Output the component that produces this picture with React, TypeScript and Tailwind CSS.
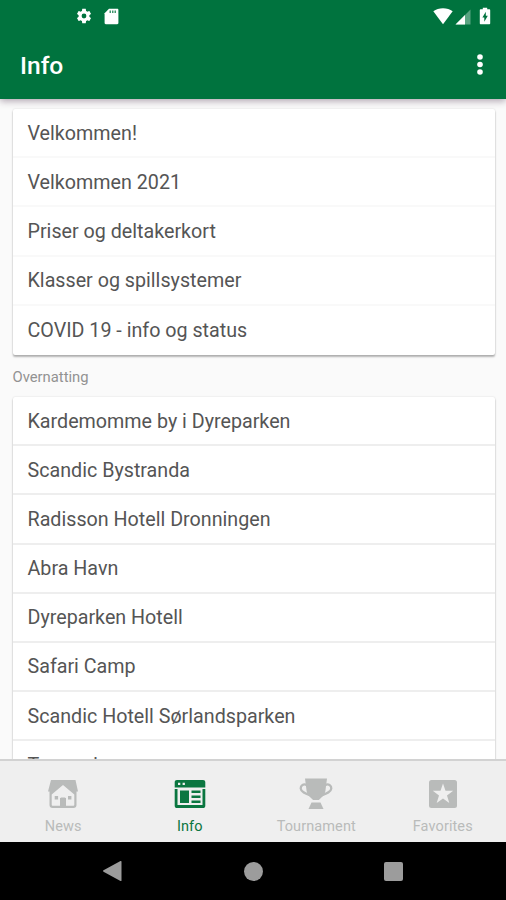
import { ReactNode } from 'react';

const infoItems = [
    'Velkommen!',
    'Velkommen 2021',
    'Priser og deltakerkort',
    'Klasser og spillsystemer',
    'COVID 19 - info og status',
];

const hotelItems = [
    'Kardemomme by i Dyreparken',
    'Scandic Bystranda',
    'Radisson Hotell Dronningen',
    'Abra Havn',
    'Dyreparken Hotell',
    'Safari Camp',
    'Scandic Hotell Sørlandsparken',
    'Travparken',
];

const StatusBar = () => (
    <div className="flex h-8 shrink-0 items-center pl-[75px] pr-[15.5px] text-white">
        <svg width="18" height="18" viewBox="0 0 24 24" fill="currentColor">
            <path d="M19.14 12.94c.04-.3.06-.61.06-.94 0-.32-.02-.64-.07-.94l2.03-1.58c.18-.14.23-.41.12-.61l-1.92-3.32c-.12-.22-.37-.29-.59-.22l-2.39.96c-.5-.38-1.03-.7-1.62-.94l-.36-2.54c-.04-.24-.24-.41-.48-.41h-3.84c-.24 0-.43.17-.47.41l-.36 2.54c-.59.24-1.13.57-1.62.94l-2.39-.96c-.22-.08-.47 0-.59.22L2.74 8.87c-.12.21-.08.47.12.61l2.03 1.58c-.05.3-.09.63-.09.94s.02.64.07.94l-2.03 1.58c-.18.14-.23.41-.12.61l1.92 3.32c.12.22.37.29.59.22l2.39-.96c.5.38 1.03.7 1.62.94l.36 2.54c.05.24.24.41.48.41h3.84c.24 0 .44-.17.47-.41l.36-2.54c.59-.24 1.13-.56 1.62-.94l2.39.96c.22.08.47 0 .59-.22l1.92-3.32c.12-.22.07-.47-.12-.61l-2.01-1.58zM12 15.2A3.2 3.2 0 1 1 12 8.8a3.2 3.2 0 0 1 0 6.4z" />
        </svg>
        <svg className="ml-[10.5px]" width="15" height="17" viewBox="0 0 15 17">
            <path d="M5 .7h8.2c.7 0 1.2.5 1.2 1.2v13.2c0 .7-.5 1.2-1.2 1.2H1.8c-.7 0-1.2-.5-1.2-1.2V5.2z" fill="currentColor" />
            <path d="M5.5 2.5H7v2.400H5.500zM8 2.500h1.500v2.400H8zM10.500 2.500H12v2.400h-1.500z" fill="#00733e" opacity=".75" />
        </svg>
        <svg className="ml-auto" width="20" height="17" viewBox="0 0 20 17" fill="currentColor">
            <path d="M.3 3.300C3 1.300 6.300.3 10 .3s7 1 9.700 3L10 16.200z" />
        </svg>
        <svg className="ml-[2px] mt-px" width="16" height="16" viewBox="0 0 16 16" fill="currentColor">
            <path d="M15.500.5v15H.5z" opacity=".35" />
            <path d="M10 6v9.500H.5z" />
        </svg>
        <svg className="ml-[8px]" width="12" height="18" viewBox="0 0 12 18">
            <path d="M3.800.8h4.400v1.500h2c.6 0 1 .4 1 1v12.900c0 .6-.4 1-1 1H1.800c-.6 0-1-.4-1-1V3.300c0-.6.4-1 1-1h2z" fill="white" />
            <path d="M6.800 4.800v4h2L5.300 14.700v-4.200H3.400z" fill="#00733e" />
        </svg>
    </div>
);

const ListCard = ({ items, faint }: { items: string[]; faint?: boolean }) => (
    <div className="ml-[12.5px] mr-[11.5px] rounded-[2px] bg-white shadow-[0_2px_2px_rgba(0,0,0,0.28),0_0_2px_rgba(0,0,0,0.14)]">
        {items.map((item) => (
            <div
                key={item}
                className={`flex h-[49.2px] items-center border-b-2 pt-[1.5px] pl-[15px] text-[19.7px] text-[#555555] last:border-b-0 last:pt-0 ${faint ? 'border-[#f9f9f9]' : 'border-[#eeeeee]'}`}
            >
                {item}
            </div>
        ))}
    </div>
);

const Tab = ({ label, icon, active }: { label: string; icon: ReactNode; active?: boolean }) => (
    <div className={`flex flex-1 flex-col items-center pt-[16px] ${active ? 'text-[#0a7640]' : 'text-[#b9bbba]'}`}>
        {icon}
        <span className="mt-[7.500px] text-[14.5px] leading-[18px] tracking-[0.1px]">{label}</span>
    </div>
);

const NewsIcon = () => (
    <svg width="34" height="34" viewBox="0 0 34 34">
        <path d="M5 3h24.500l2.500 11.500h-1.500V28c0 1.700-1.200 3-3 3h-21c-1.800 0-3-1.300-3-3V14.500H2z" fill="currentColor" />
        <path d="M17 8 28.300 17.500v10.200c0 .7-.3 1-.9 1H20v-7.700h-6v7.700H6.600c-.6 0-.9-.3-.9-1V17.500z" fill="#efefef" />
        <path d="M8.700 19h3.400v3.400H8.700zM22 19h3.400v3.400H22zM14.800 20.500h4.400V29h-4.400z" fill="currentColor" />
    </svg>
);

const InfoIcon = () => (
    <svg width="34" height="34" viewBox="0 0 34 34" fill="currentColor">
        <path fillRule="evenodd" d="M4 3h26c1.400 0 2.300.9 2.300 2.300v5.200H1.700V5.300C1.700 3.900 2.600 3 4 3zm1 2.800V8h2.300V5.800zm4.600 0V8h2.300V5.800z" />
        <path d="M1.700 12h2.800v16h25V12h2.800v16.700c0 1.400-.9 2.300-2.300 2.300H4c-1.400 0-2.300-.9-2.300-2.300z" />
        <path d="M7 13.500h9V26H7zM18.500 13.500h9V16h-9zM18.500 18.500h9V21h-9zM18.500 23.500h9V26h-9z" />
    </svg>
);

const TrophyIcon = () => (
    <svg width="34" height="34" viewBox="0 0 34 34" fill="currentColor">
        <path d="M6 1.500h22l-1.600 12.500C25.700 18.500 22 20.500 20 23H14c-2-2.500-5.700-4.500-6.400-9z" />
        <path d="M8 8.200C4.500 6.200 1.500 8.500 1.700 11.500c.3 3.700 5.300 5.300 11 7.500M26 8.200c3.500-2 6.500.3 6.300 3.300-.3 3.700-5.300 5.300-11 7.500" fill="none" stroke="currentColor" strokeWidth="2.300" />
        <path d="M12.500 25.500h9l3 6.500h-15z" />
    </svg>
);

const StarIcon = () => (
    <svg width="34" height="34" viewBox="0 0 34 34">
        <rect x="3" y="3" width="28" height="28" rx="2.500" fill="currentColor" />
        <path d="m17 6.500 2.500 7.300h7.700L21 18.500l2.300 7.400L17 21.400l-6.300 4.500 2.300-7.400-6.200-4.700h7.700z" fill="#efefef" />
    </svg>
);

export default function App() {
    return (
        <div className="flex h-[900px] w-[506px] flex-col overflow-hidden bg-[#fafafa] font-['Roboto',sans-serif]">
            {/* App bar */}
            <header className="relative z-10 flex h-[98.5px] shrink-0 flex-col bg-[#00733e] shadow-[0_2px_7px_rgba(60,30,60,0.4)]">
                <StatusBar />
                <div className="flex flex-1 items-center justify-between pl-[20px] pr-[23.5px] text-white">
                    <h1 className="pt-[3px] text-[24.6px] font-medium">Info</h1>
                    <svg className="mb-px" width="6" height="21" viewBox="0 0 6 21" fill="currentColor">
                        <circle cx="3" cy="3" r="2.800" />
                        <circle cx="3" cy="10.500" r="2.800" />
                        <circle cx="3" cy="18" r="2.800" />
                    </svg>
                </div>
            </header>

            {/* Scrolling list */}
            <main className="min-h-0 flex-1 overflow-hidden pt-[10.5px]">
                <ListCard items={infoItems} faint />
                <h2 className="flex h-[42px] items-center pt-[2px] pl-[12.5px] text-[14.8px] text-[#929292]">Overnatting</h2>
                <ListCard items={hotelItems} />
            </main>

            {/* Bottom tabs */}
            <nav className="flex h-[83.5px] shrink-0 border-t-2 border-[#d2d2d2] bg-[#efefef]">
                <Tab label="News" icon={<NewsIcon />} />
                <Tab label="Info" icon={<InfoIcon />} active />
                <Tab label="Tournament" icon={<TrophyIcon />} />
                <Tab label="Favorites" icon={<StarIcon />} />
            </nav>

            {/* System navigation */}
            <footer className="flex h-[58px] shrink-0 items-center justify-between bg-black pl-[102px] pr-[103px] text-[#9c9c9c]">
                <svg width="20" height="22" viewBox="0 0 20 22" fill="currentColor">
                    <path d="M19.500 1.500v19c0 .5-.5.700-1 .4L1.500 11.700c-.6-.4-.6-1 0-1.400L18.500 1.100c.5-.3 1-.1 1 .4z" />
                </svg>
                <div className="size-[19px] rounded-full bg-[#9c9c9c]"></div>
                <div className="size-[19px] rounded-[2px] bg-[#9c9c9c]"></div>
            </footer>
        </div>
    );
}
